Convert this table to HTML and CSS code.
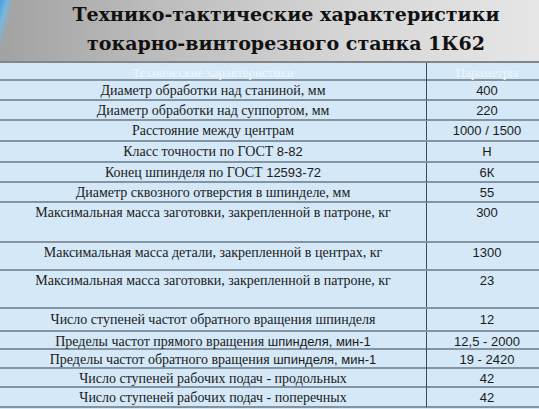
FILE: index.html
```html
<!DOCTYPE html>
<html lang="ru">
<head>
<meta charset="utf-8">
<title>Технико-тактические характеристики токарно-винторезного станка 1К62</title>
<link rel="stylesheet" href="styles.css">
</head>
<body>
<header class="title">
  <h1 class="title__text">Технико-тактические характеристики<br>токарно-винторезного станка 1К62</h1>
</header>
<div class="spec">
  <div class="spec__row spec__row--head h18"><div class="spec__name"><span>Технические характеристики</span></div><div class="spec__val">Параметры</div></div>
  <div class="spec__row h20"><div class="spec__name"><span>Диаметр обработки над станиной, мм</span></div><div class="spec__val">400</div></div>
  <div class="spec__row h20"><div class="spec__name"><span>Диаметр обработки над суппортом, мм</span></div><div class="spec__val">220</div></div>
  <div class="spec__row h21"><div class="spec__name"><span>Расстояние между центрам</span></div><div class="spec__val">1000 / 1500</div></div>
  <div class="spec__row h21"><div class="spec__name"><span>Класс точности по ГОСТ <span class="num">8-82</span></span></div><div class="spec__val">Н</div></div>
  <div class="spec__row h20"><div class="spec__name"><span>Конец шпинделя по ГОСТ <span class="num">12593-72</span></span></div><div class="spec__val">6К</div></div>
  <div class="spec__row h20"><div class="spec__name"><span>Диаметр сквозного отверстия в шпинделе, мм</span></div><div class="spec__val">55</div></div>
  <div class="spec__row spec__row--top h40"><div class="spec__name"><span>Максимальная масса заготовки, закрепленной в патроне, кг</span></div><div class="spec__val">300</div></div>
  <div class="spec__row spec__row--top h28"><div class="spec__name"><span>Максимальная масса детали, закрепленной в центрах, кг</span></div><div class="spec__val">1300</div></div>
  <div class="spec__row spec__row--top h38"><div class="spec__name"><span>Максимальная масса заготовки, закрепленной в патроне, кг</span></div><div class="spec__val">23</div></div>
  <div class="spec__row h23"><div class="spec__name"><span>Число ступеней частот обратного вращения шпинделя</span></div><div class="spec__val">12</div></div>
  <div class="spec__row h18"><div class="spec__name"><span>Пределы частот прямого вращения <span class="num">шпинделя, мин-1</span></span></div><div class="spec__val">12,5 - 2000</div></div>
  <div class="spec__row h19"><div class="spec__name"><span>Пределы частот обратного вращения <span class="num">шпинделя, мин-1</span></span></div><div class="spec__val">19 - 2420</div></div>
  <div class="spec__row h19"><div class="spec__name"><span>Число ступеней рабочих подач - продольных</span></div><div class="spec__val">42</div></div>
  <div class="spec__row h20"><div class="spec__name"><span>Число ступеней рабочих подач - поперечных</span></div><div class="spec__val">42</div></div>
</div>
</body>
</html>
```
FILE: styles.css
```css
html, body {
  margin: 0;
  padding: 0;
}
body {
  width: 539px;
  height: 409px;
  overflow: hidden;
  background: #d4e8f7;
  font-family: "Liberation Serif", "Times New Roman", serif;
  color: #1b1b1b;
}
.title {
  height: 61px;
  border-bottom: 2px solid #858585;
  box-sizing: content-box;
  background:
    linear-gradient(105deg, #3f9fe0 0px, #7ab7dc 7px, rgba(160,160,160,0) 14px),
    linear-gradient(to right, #a2a2a2 0%, #bdbdbd 30%, #d6d6d6 65%, #e6e6e6 100%);
  padding-left: 33px;
}
.title__text {
  margin: 0;
  padding-top: 0;
  text-align: center;
  font-family: "DejaVu Serif", "Liberation Serif", serif;
  font-weight: bold;
  font-size: 19px;
  line-height: 29px;
  color: #111;
}
.spec {
  width: 547px;
}
.spec__row {
  display: grid;
  grid-template-columns: 427px 120px;
  box-sizing: border-box;
  border-bottom: 2px solid #8494a0;
  font-size: 14px;
  line-height: 19px;
  align-items: center;
}
.spec__row--top {
  align-items: start;
}
.spec__name, .spec__val {
  text-align: center;
  white-space: nowrap;
}
.spec__name {
  border-right: 1px solid #3d4a56;
  height: 100%;
  display: flex;
  align-items: center;
  justify-content: center;
}
.spec__row--top .spec__name {
  align-items: flex-start;
}
.spec__val {
  font-family: "Liberation Sans", Arial, sans-serif;
  font-size: 13px;
}
.spec__row--head .spec__name,
.spec__row--head .spec__val {
  color: #eef6fc;
  font-family: "Liberation Serif", serif;
  font-size: 13px;
}
.num {
  font-family: "Liberation Sans", Arial, sans-serif;
  font-size: 13px;
}
.h18 { height: 18px; }
.h19 { height: 19px; }
.h20 { height: 20px; }
.h21 { height: 21px; }
.h23 { height: 23px; }
.h28 { height: 28px; }
.h38 { height: 38px; }
.h40 { height: 40px; }
```
